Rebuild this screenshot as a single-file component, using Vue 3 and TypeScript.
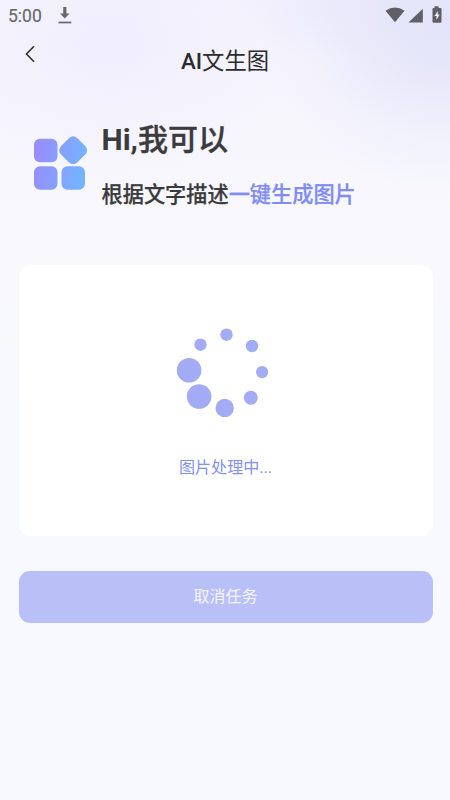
<script setup lang="ts">
interface Dot {
  x: number
  y: number
  r: number
}

const dots: Dot[] = [
  { x: 66.5, y: 19.7, r: 6.2 },
  { x: 92, y: 31, r: 6.2 },
  { x: 102.1, y: 57.1, r: 6.1 },
  { x: 90.8, y: 82.7, r: 7 },
  { x: 64.7, y: 92.9, r: 9.2 },
  { x: 39.1, y: 81.5, r: 12.3 },
  { x: 29.1, y: 55.3, r: 12.3 },
  { x: 40.5, y: 29.7, r: 6.2 },
]
</script>

<template>
  <main class="screen">
    <div class="status">
      <span class="time">5:00</span>
      <svg class="download" width="14" height="18" viewBox="0 0 14 18">
        <path d="M5.2 0.9h3.2v6.5h3.2L6.8 12.5 2 7.4h3.2z" fill="#68686c" />
        <path d="M0.5 16.5h12.8" stroke="#68686c" stroke-width="1.7" />
      </svg>
      <svg class="signals" width="58" height="18" viewBox="0 0 58 18">
        <path d="M0.5 4.8Q10 -1.8 19.5 4.8L10 16.2z" fill="#5f5f65" />
        <path d="M37.8 2.7v13.9H23.4z" fill="#5f5f65" />
        <path d="M49.5 0.3h4.1v1.8h1.9q1 0 1 1v12.6q0 1-1 1h-7q-1 0-1-1V3.1q0-1 1-1h1z" fill="#5f5f65" />
        <path d="M52.9 4.7l-3.4 5.4h2v4l3.1-5.5h-1.9z" fill="#f0effb" />
      </svg>
    </div>

    <header class="nav">
      <button class="back" aria-label="返回">
        <svg width="12" height="18" viewBox="0 0 12 18">
          <path d="M10 1.3L2.5 9 10 16.7" fill="none" stroke="#303033" stroke-width="1.6" />
        </svg>
      </button>
      <h1><b>AI</b>文生图</h1>
    </header>

    <section class="intro">
      <svg class="logo" width="56" height="56" viewBox="0 0 56 56">
        <defs>
          <linearGradient id="tile" gradientUnits="userSpaceOnUse" x1="1" y1="24" x2="53" y2="34">
            <stop offset="0" stop-color="#988dff" />
            <stop offset="1" stop-color="#72b5ff" />
          </linearGradient>
        </defs>
        <g fill="url(#tile)">
          <rect x="1" y="3.8" width="23.5" height="23.5" rx="6" />
          <rect x="1" y="31.2" width="23.5" height="23.5" rx="6" />
          <rect x="28.5" y="31.2" width="23.5" height="23.5" rx="6" />
          <path d="M35.6 3.1Q40.3-1.6 45 3.1L52.5 10.6Q57 15.3 52.5 20L45 27.5Q40.3 32.2 35.6 27.5L28.1 20Q23.6 15.3 28.1 10.6z" transform="translate(1.2 .5) scale(.967)" />
        </g>
      </svg>
      <div class="copy">
        <h2><b>Hi,</b>我可以</h2>
        <p>根据文字描述<em>一键生成图片</em></p>
      </div>
    </section>

    <section class="card">
      <svg class="spinner" width="130" height="110" viewBox="0 0 130 110">
        <circle v-for="(dot, i) in dots" :key="i" :cx="dot.x" :cy="dot.y" :r="dot.r" fill="#a2abf4" />
      </svg>
      <p>图片处理中...</p>
    </section>

    <button class="cancel">取消任务</button>
  </main>
</template>

<style>
body {
  margin: 0;
}
</style>

<style scoped>
.screen {
  box-sizing: border-box;
  width: 450px;
  height: 800px;
  overflow: hidden;
  display: flex;
  flex-direction: column;
  font-family: Roboto, "Noto Sans CJK SC", sans-serif;
  color: #3b3b3d;
  background:
    radial-gradient(ellipse 180px 165px at 440px 25px, #e3e4f9 0%, rgba(227, 228, 249, 0.75) 35%, rgba(227, 228, 249, 0.25) 70%, rgba(227, 228, 249, 0) 100%),
    radial-gradient(ellipse 110px 60px at 335px 0, rgba(232, 229, 250, 0.5) 0%, rgba(232, 229, 250, 0) 100%),
    radial-gradient(ellipse 190px 130px at 110px 45px, rgba(240, 238, 253, 0.9) 0%, rgba(240, 238, 253, 0) 100%),
    linear-gradient(180deg, #f5f3fd 0, #f7f6fd 130px, #f8f8fd 240px, #f8f9fe 400px);
}

h1,
h2,
p {
  margin: 0;
  white-space: nowrap;
}

button {
  border: 0;
  padding: 0;
  font-family: inherit;
}

.status {
  display: flex;
  align-items: flex-start;
  height: 31px;
  padding: 6px 8px 0;
  box-sizing: border-box;
}

.time {
  width: 50px;
  font-size: 17.5px;
  line-height: 20px;
  color: #68686c;
  -webkit-text-stroke: 0.2px currentColor;
}

.signals {
  margin-left: auto;
  margin-right: -1px;
}

.nav {
  display: grid;
  grid-template-columns: 60px 1fr 60px;
  height: 60px;
}

.back {
  justify-self: start;
  align-self: start;
  height: 18px;
  margin: 14px 0 0 24px;
  background: none;
}

.back svg {
  display: block;
}

h1 {
  text-align: center;
  font-size: 22.3px;
  font-weight: 400;
  line-height: 60px;
  color: #2c2c2e;
}

h1 b {
  font-weight: 500;
}

.intro {
  display: flex;
  align-items: flex-start;
  height: 174px;
  padding-left: 33px;
}

.logo {
  margin-top: 44px;
}

.copy {
  margin: 27px 0 0 12.5px;
}

h2 {
  font-size: 30px;
  font-weight: 500;
  line-height: 44px;
  -webkit-text-stroke: 0.35px currentColor;
}

h2 b {
  font-weight: 700;
  -webkit-text-stroke: 0;
}

.copy p {
  margin-top: 16px;
  font-size: 21.2px;
  font-weight: 500;
  line-height: 33px;
  -webkit-text-stroke: 0.25px currentColor;
}

em {
  font-style: normal;
  color: #7f8cf5;
}

.card {
  display: flex;
  flex-direction: column;
  align-items: center;
  box-sizing: border-box;
  width: 414px;
  height: 271px;
  margin-left: 18.5px;
  padding-top: 50px;
  border-radius: 12px;
  background: #fff;
}

.spinner {
  margin-right: 1px;
}

.card p {
  margin-top: 31px;
  font-size: 16.1px;
  line-height: 24px;
  color: #8390f2;
}

.cancel {
  width: 414px;
  height: 52px;
  margin: 35px 0 0 18.5px;
  border-radius: 11px;
  background: #b9c0f7;
  color: #f5f5ff;
  font-size: 16px;
  line-height: 50px;
}
</style>
